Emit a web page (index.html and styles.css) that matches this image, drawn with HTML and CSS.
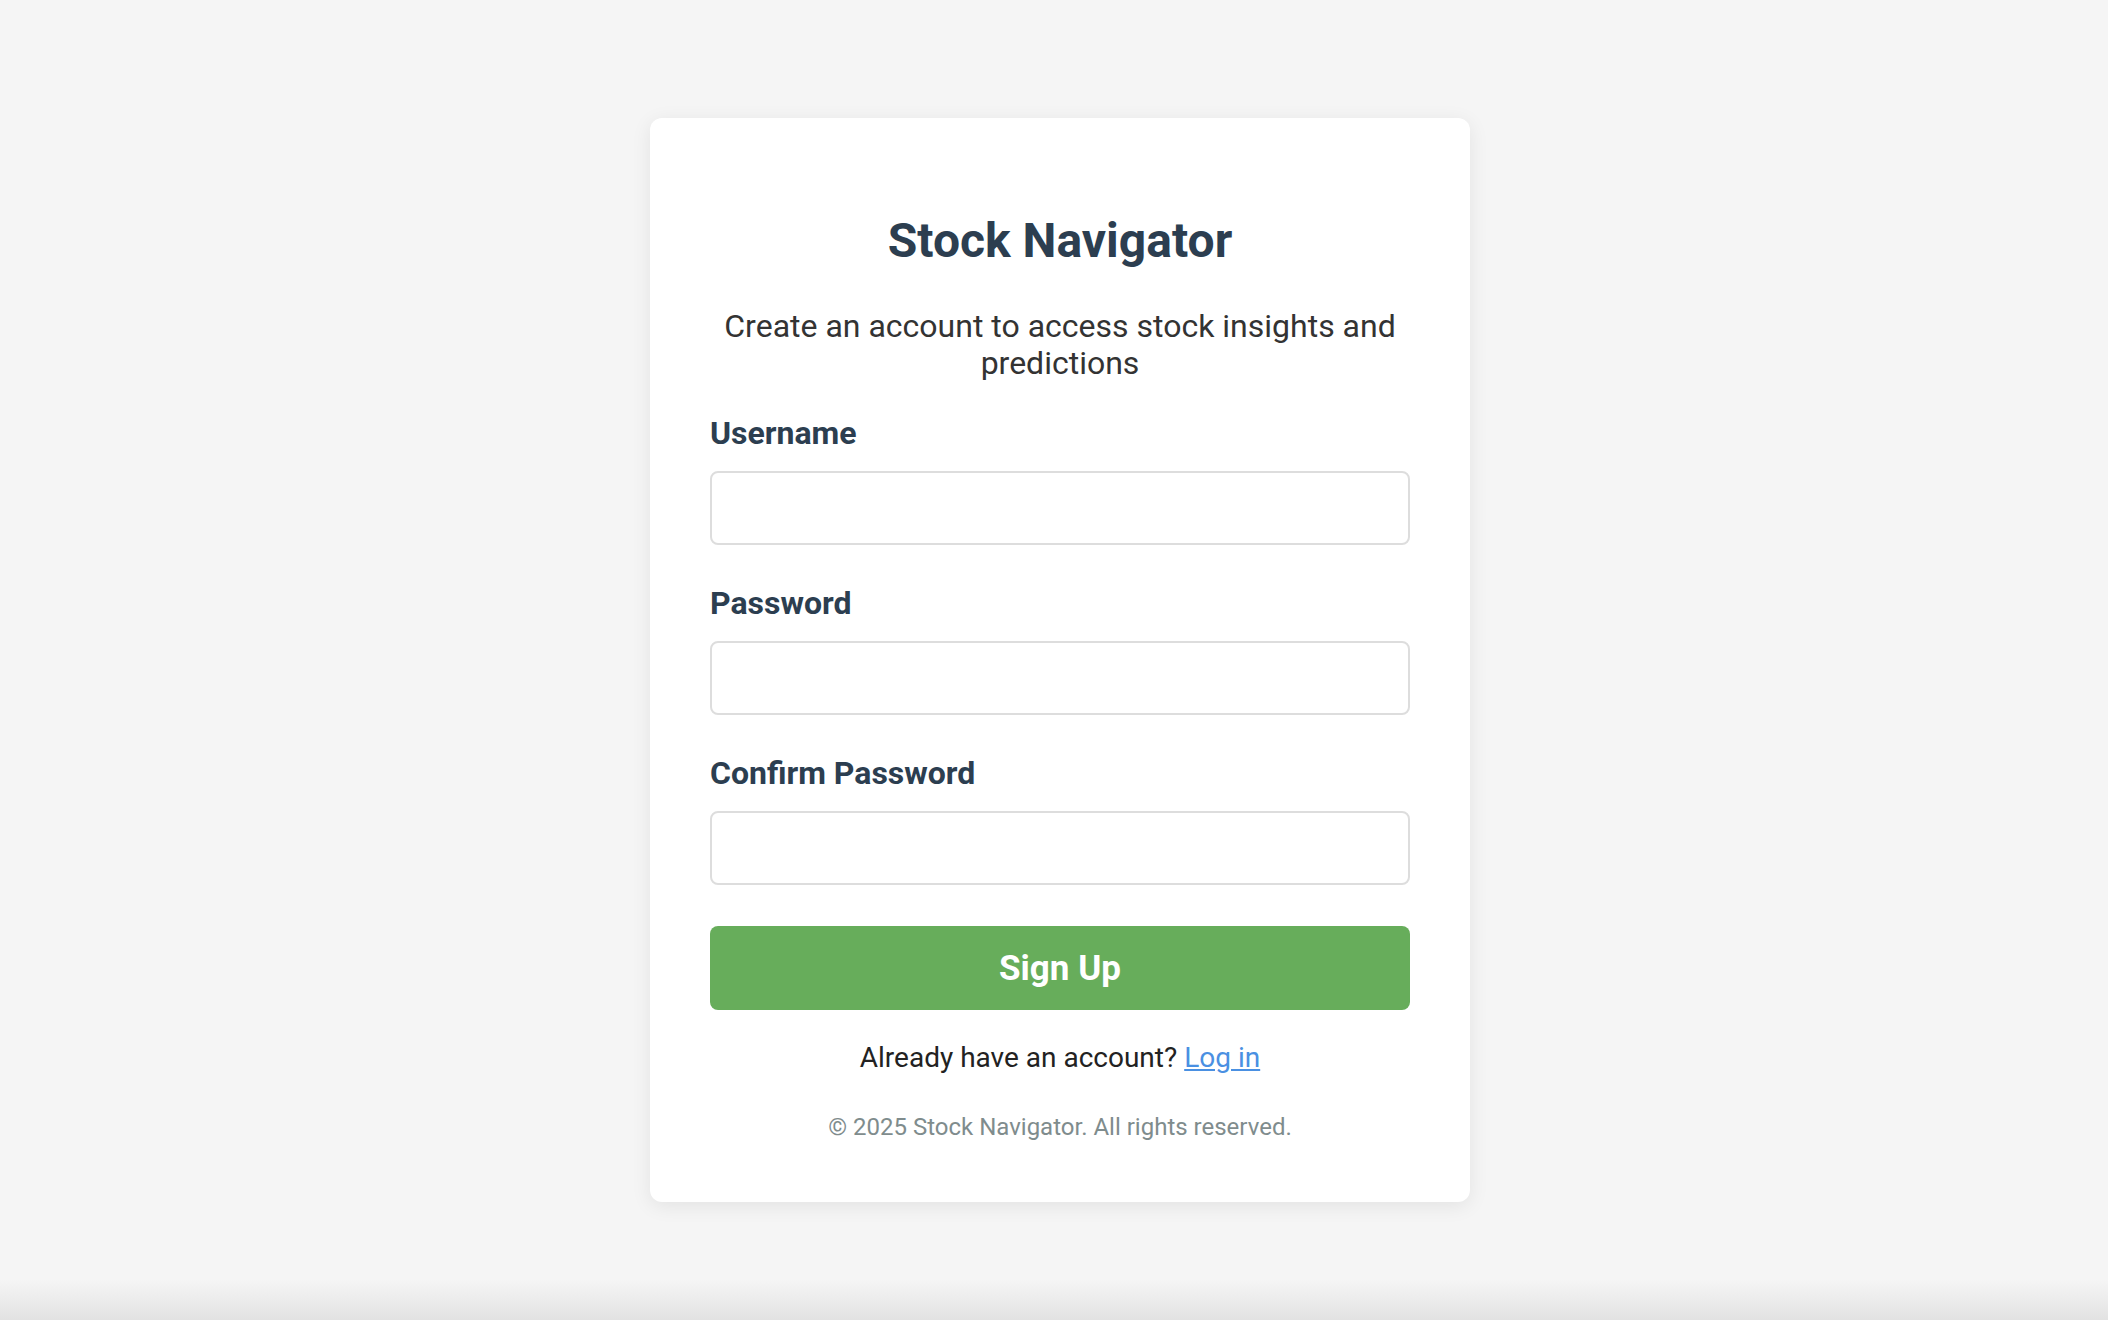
FILE: index.html
```html
<!DOCTYPE html>
<html lang="en">
<head>
<meta charset="utf-8">
<title>Stock Navigator - Sign Up</title>
<link rel="stylesheet" href="styles.css">
</head>
<body>
  <main class="card">
    <h1 class="title">Stock Navigator</h1>
    <p class="subtitle">Create an account to access stock insights and predictions</p>
    <form class="form">
      <div class="field">
        <label class="label" for="username">Username</label>
        <input class="input" id="username" type="text">
      </div>
      <div class="field">
        <label class="label" for="password">Password</label>
        <input class="input" id="password" type="password">
      </div>
      <div class="field">
        <label class="label" for="confirm">Confirm Password</label>
        <input class="input" id="confirm" type="password">
      </div>
      <button class="button" type="button">Sign Up</button>
    </form>
    <p class="login">Already have an account? <a class="link" href="#">Log in</a></p>
    <p class="copyright">© 2025 Stock Navigator. All rights reserved.</p>
  </main>
</body>
</html>
```
FILE: styles.css
```css
html, body {
  margin: 0;
  padding: 0;
}
body {
  box-sizing: border-box;
  min-height: 100vh;
  padding-left: 12px;
  background: linear-gradient(to bottom, #f5f5f5 0, #f5f5f5 calc(100% - 40px), #e2e2e2 100%);
  font-family: Roboto, "Liberation Sans", Arial, sans-serif;
  display: flex;
  flex-direction: column;
  align-items: center;
}
.card {
  box-sizing: border-box;
  width: 820px;
  margin-top: 118px;
  padding: 60px 60px 61px;
  background: #ffffff;
  border-radius: 12px;
  box-shadow: 0 4px 20px rgba(0, 0, 0, 0.08);
}
.title {
  margin: 34.7px 0 39.2px;
  font-size: 48px;
  font-weight: 700;
  line-height: 56px;
  color: #2c3e50;
  text-align: center;
}
.subtitle {
  margin: 0 0 32.15px;
  font-size: 32px;
  line-height: 37.6px;
  color: #333333;
  text-align: center;
}
.form {
  display: flex;
  flex-direction: column;
  gap: 40.5px;
}
.field {
  display: flex;
  flex-direction: column;
}
.label {
  font-size: 32px;
  font-weight: 700;
  line-height: 37.5px;
  color: #2c3e50;
  margin-bottom: 18px;
}
.input {
  box-sizing: border-box;
  height: 74px;
  width: 100%;
  border: 2px solid #dddddd;
  border-radius: 8px;
  background: #ffffff;
  font-size: 30px;
  padding: 0 18px;
}
.button {
  margin-top: 1.25px;
  height: 84px;
  width: 100%;
  border: 0;
  border-radius: 8px;
  background: #67ad5b;
  color: #ffffff;
  font-family: Roboto, "Liberation Sans", Arial, sans-serif;
  font-size: 35px;
  font-weight: 700;
}
.login {
  margin: 30.2px 0 0;
  font-size: 28px;
  line-height: 33px;
  color: #222222;
  text-align: center;
}
.link {
  color: #4a90e2;
}
.copyright {
  margin: 39.4px 0 0;
  font-size: 24px;
  line-height: 28px;
  color: #7f8c8d;
  text-align: center;
}
```
